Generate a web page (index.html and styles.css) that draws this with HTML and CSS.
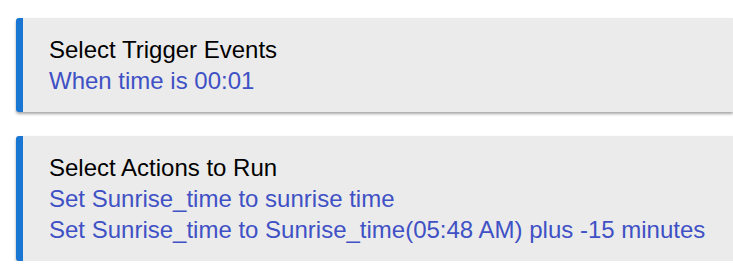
FILE: index.html
```html
<!DOCTYPE html>
<html>
<head>
    <meta charset="UTF-8">
    <title>Rule</title>
    <link rel="stylesheet" href="styles.css">
</head>
<body>
    <div class="rule">
        <div class="card">
            <div class="card-title">Select Trigger Events</div>
            <div class="card-line">When time is 00:01</div>
        </div>
        <div class="card">
            <div class="card-title">Select Actions to Run</div>
            <div class="card-line">Set Sunrise_time to sunrise time</div>
            <div class="card-line">Set Sunrise_time to Sunrise_time(05:48 AM) plus -15 minutes</div>
        </div>
    </div>
</body>
</html>
```

FILE: styles.css
```css
body {
    margin: 0;
    background: #ffffff;
    font-family: "Liberation Sans", Arial, sans-serif;
}
.rule {
    display: flex;
    flex-direction: column;
    gap: 24px;
    padding: 18px 0 0 16px;
}
.card {
    background: #ebebeb;
    border-left: 7px solid #1976d2;
    border-radius: 3px 0 0 3px;
    box-shadow: 0 2px 3px rgba(0,0,0,0.35);
    padding: 16px 0 16px 26px;
    font-size: 24px;
    line-height: 31px;
}
.card-title {
    color: #000000;
}
.card-line {
    color: #3f51c5;
}
```
